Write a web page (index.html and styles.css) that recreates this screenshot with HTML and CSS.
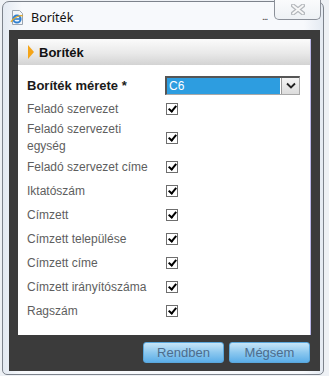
FILE: index.html
```html
<!DOCTYPE html>
<html lang="hu">
<head>
<meta charset="utf-8">
<title>Boríték</title>
<link rel="stylesheet" href="styles.css">
</head>
<body>
<div class="window">
  <div class="titlebar">
    <svg class="app-icon" width="15" height="15" viewBox="0 0 15 15">
      <path d="M2.5 0.5h7l3 3v11h-10z" fill="#f4f6f9" stroke="#9aa4b0"/>
      <circle cx="7" cy="9" r="3.6" fill="none" stroke="#2f7fd0" stroke-width="2"/>
      <path d="M3.8 9h6.6" stroke="#2f7fd0" stroke-width="1.6"/>
      <path d="M1 12c3-5 9-7 12-6" fill="none" stroke="#e2a82a" stroke-width="1.2"/>
    </svg>
    <span class="title">Boríték</span>
    <span class="dots">...</span>
    <div class="close">
      <svg width="14" height="11" viewBox="0 0 14 11">
        <path d="M2 1.5l10 8M12 1.5l-10 8" stroke="#8a8e94" stroke-width="4.2" stroke-linecap="round" opacity="0.6"/>
        <path d="M2 1.5l10 8M12 1.5l-10 8" stroke="#f8f8f8" stroke-width="1.8" stroke-linecap="round"/>
      </svg>
    </div>
  </div>
  <div class="content">
    <div class="panel">
      <div class="panel-header">
        <span class="arrow"></span>
        <span class="panel-title">Boríték</span>
      </div>
      <div class="form">
        <div class="row">
          <div class="label strong">Boríték mérete *</div>
          <div class="control">
            <div class="select">
              <span class="select-value">C6</span>
              <span class="select-btn">
                <svg width="10" height="7" viewBox="0 0 10 7"><path d="M1 1.5l4 4 4-4" fill="none" stroke="#222" stroke-width="1.8"/></svg>
              </span>
            </div>
          </div>
        </div>
        <div class="row"><div class="label">Feladó szervezet</div><div class="control"><span class="check"></span></div></div>
        <div class="row tall"><div class="label">Feladó szervezeti<br>egység</div><div class="control"><span class="check"></span></div></div>
        <div class="row"><div class="label">Feladó szervezet címe</div><div class="control"><span class="check"></span></div></div>
        <div class="row"><div class="label">Iktatószám</div><div class="control"><span class="check"></span></div></div>
        <div class="row"><div class="label">Címzett</div><div class="control"><span class="check"></span></div></div>
        <div class="row"><div class="label">Címzett települése</div><div class="control"><span class="check"></span></div></div>
        <div class="row"><div class="label">Címzett címe</div><div class="control"><span class="check"></span></div></div>
        <div class="row"><div class="label">Címzett irányítószáma</div><div class="control"><span class="check"></span></div></div>
        <div class="row"><div class="label">Ragszám</div><div class="control"><span class="check"></span></div></div>
      </div>
    </div>
    <div class="buttons">
      <button class="btn">Rendben</button>
      <button class="btn">Mégsem</button>
    </div>
  </div>
</div>
</body>
</html>
```
FILE: styles.css
```css
html, body {
  margin: 0;
  padding: 0;
}
body {
  width: 329px;
  height: 376px;
  overflow: hidden;
  background: #eef1f5;
  font-family: "Liberation Sans", Arial, sans-serif;
}
.window {
  margin: 1px 0 0 2px;
  width: 322px;
  height: 374px;
  box-sizing: border-box;
  border: 1px solid #7d838c;
  border-radius: 7px 7px 5px 5px;
  background: linear-gradient(90deg, #e4eaf2, #f7f9fc 6%, #f7f9fc 94%, #e4eaf2);
  display: flex;
  flex-direction: column;
}
.titlebar {
  height: 27px;
  display: flex;
  align-items: center;
  padding-left: 7px;
  position: relative;
}
.app-icon {
  margin-top: 3px;
}
.title {
  margin-left: 6px;
  margin-top: 3px;
  font-family: "Noto Sans", "DejaVu Sans", sans-serif;
  font-size: 12.5px;
  color: #111;
}
.dots {
  position: absolute;
  left: 259px;
  top: 9px;
  font-size: 10px;
  color: #333;
  letter-spacing: -1px;
}
.close {
  position: absolute;
  left: 271px;
  top: -2px;
  width: 47px;
  height: 20px;
  box-sizing: border-box;
  border: 1px solid #8b9099;
  border-top: none;
  border-radius: 0 0 5px 5px;
  background: linear-gradient(#fafbfc, #eef1f5);
  display: flex;
  align-items: center;
  justify-content: center;
}
.content {
  margin-left: 6px;
  width: 311px;
  height: 341px;
  margin-top: 1px;
  background: #3b3b3b;
  box-sizing: border-box;
  padding: 9px 9px 0 9px;
  display: flex;
  flex-direction: column;
}
.panel {
  background: #fff;
  height: 296px;
  border-right: 1px solid #b9b6e6;
  box-sizing: border-box;
  display: flex;
  flex-direction: column;
}
.panel-header {
  height: 26px;
  flex: none;
  background: linear-gradient(#fbfbfb, #e9e9e9 55%, #d3d3d3);
  display: flex;
  align-items: center;
  padding-left: 10px;
}
.arrow {
  width: 0;
  height: 0;
  border-top: 7px solid transparent;
  border-bottom: 7px solid transparent;
  border-left: 6px solid #f4a418;
}
.panel-title {
  margin-left: 5px;
  font-weight: bold;
  font-size: 13px;
  color: #111;
}
.form {
  padding: 8px 0 0 9px;
}
.row {
  display: flex;
  align-items: center;
  height: 24px;
}
.row.tall {
  height: 34px;
}
.label {
  width: 139px;
  flex: none;
  font-size: 12px;
  line-height: 17px;
  color: #5e5e5e;
}
.label.strong {
  font-weight: bold;
  font-size: 13px;
  color: #1a1a1a;
}
.control {
  display: flex;
  align-items: center;
}
.select {
  margin-left: -1px;
  width: 135px;
  height: 19px;
  box-sizing: border-box;
  border: 1px solid #7a7a7a;
  border-top: 2px solid #555;
  border-left: 2px solid #555;
  border-bottom-color: #a8a8a8;
  border-right-color: #a8a8a8;
  display: flex;
  background: #fff;
}
.select-value {
  flex: 1;
  background: #2d9de0;
  color: #fff;
  font-size: 12px;
  line-height: 16px;
  padding-left: 2px;
  margin-right: 1px;
}
.select-btn {
  width: 17px;
  background: linear-gradient(#f4f4f4, #dcdcdc);
  border-left: 1px solid #9a9a9a;
  display: flex;
  align-items: center;
  justify-content: center;
}
.check {
  width: 12px;
  height: 12px;
  box-sizing: border-box;
  border: 1px solid #6e6e6e;
  background: #fff;
  position: relative;
}
.check::after {
  content: "";
  position: absolute;
  left: 3px;
  top: 0px;
  width: 3px;
  height: 6px;
  border-right: 2px solid #000;
  border-bottom: 2px solid #000;
  transform: rotate(40deg);
}
.buttons {
  display: flex;
  justify-content: flex-end;
  gap: 5px;
  margin-top: 7px;
  padding-right: 1px;
}
.btn {
  width: 81px;
  height: 21px;
  border: 1px solid #5aa7dc;
  border-radius: 3px;
  background: linear-gradient(#c7e5f8, #8cc8ef 50%, #5caee8);
  color: #4d6c8c;
  font-family: "Liberation Sans", Arial, sans-serif;
  font-size: 13px;
  padding: 0;
}
```
